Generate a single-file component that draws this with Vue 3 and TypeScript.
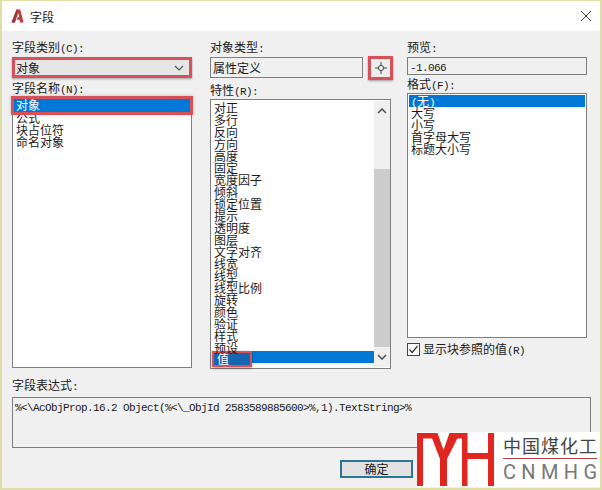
<script setup lang="ts">
const names: string[] = ['公式', '块占位符', '命名对象']
const props: string[] = ['对正', '多行', '反向', '方向', '高度', '固定', '宽度因子', '倾斜', '锁定位置', '提示', '透明度', '图层', '文字对齐', '线宽', '线型', '线型比例', '旋转', '颜色', '验证', '样式', '预设']
const formats: string[] = ['大写', '小写', '首字母大写', '标题大小写']
const logoLetters: string[] = ['C', 'N', 'M', 'H', 'G']
const expression = '%<\\AcObjProp.16.2 Object(%<\\_ObjId 2583589885600>%,1).TextString>%'
</script>

<template>
  <div class="window">
    <header class="title">
      <svg class="app-icon" width="13" height="14" viewBox="0 0 14 14" preserveAspectRatio="none">
        <path d="M0.5 13.5 L6 0.5 H10 L13.5 13.5 H9.6 L9.2 10.8 H6 L7.4 8 H8.7 L7.9 4 L4.2 13.5 Z" fill="#c43c42" />
        <path d="M0.5 13.5 L6 0.5 H7.5 L4.2 13.5 Z" fill="#8e3a40" />
      </svg>
      <span class="title-text">字段</span>
      <svg class="close" width="12" height="12" viewBox="0 0 12 12">
        <path d="M1 1 L11 11 M11 1 L1 11" stroke="#333" stroke-width="1" fill="none" />
      </svg>
    </header>

    <main class="content">
      <div class="top">
        <section class="col col-left">
          <label class="label">字段类别<span class="lat">(C):</span></label>
          <div class="combo">
            <span>对象</span>
            <svg width="10" height="6" viewBox="0 0 10 6"><path d="M1 1 L5 5 L9 1" stroke="#555" stroke-width="1.2" fill="none" /></svg>
          </div>
          <label class="label label-name">字段名称<span class="lat">(N):</span></label>
          <div class="list list-names">
            <div class="row selected marked">对象</div>
            <div v-for="n in names" :key="n" class="row">{{ n }}</div>
          </div>
        </section>

        <section class="col col-mid">
          <label class="label">对象类型<span class="lat">:</span></label>
          <div class="type-row">
            <div class="field type-field">属性定义</div>
            <button class="pick" type="button" aria-label="选择对象">
              <svg width="14" height="14" viewBox="0 0 14 14">
                <circle cx="7" cy="7" r="2.6" fill="none" stroke="#444" />
                <path d="M1 7 H4.4 M9.6 7 H13 M7 1 V4.4 M7 9.6 V13" stroke="#444" fill="none" />
              </svg>
            </button>
          </div>
          <label class="label label-prop">特性<span class="lat">(R):</span></label>
          <div class="list list-props">
            <div class="rows">
              <div v-for="p in props" :key="p" class="row">{{ p }}</div>
              <div class="row selected"><span class="value-mark">值</span></div>
            </div>
            <div class="scrollbar">
              <svg class="arrow" width="10" height="6" viewBox="0 0 10 6"><path d="M1 5 L5 1 L9 5" stroke="#555" stroke-width="1.6" fill="none" /></svg>
              <div class="track"><div class="thumb"></div></div>
              <svg class="arrow" width="10" height="6" viewBox="0 0 10 6"><path d="M1 1 L5 5 L9 1" stroke="#555" stroke-width="1.6" fill="none" /></svg>
            </div>
          </div>
        </section>

        <section class="col col-right">
          <label class="label">预览<span class="lat">:</span></label>
          <div class="field preview"><span class="lat">-1.066</span></div>
          <label class="label label-format">格式<span class="lat">(F):</span></label>
          <div class="list list-formats">
            <div class="row selected"><span class="lat">(</span>无<span class="lat">)</span></div>
            <div v-for="f in formats" :key="f" class="row">{{ f }}</div>
          </div>
          <div class="check-row">
            <svg width="13" height="13" viewBox="0 0 13 13">
              <rect x="0.5" y="0.5" width="12" height="12" fill="#fff" stroke="#444" />
              <path d="M2.5 6.5 L5.2 9.5 L10.5 3" stroke="#333" stroke-width="1.2" fill="none" />
            </svg>
            <span>显示块参照的值<span class="lat">(R)</span></span>
          </div>
        </section>
      </div>

      <label class="label label-expr">字段表达式<span class="lat">:</span></label>
      <div class="expr"><span class="lat">{{ expression }}</span></div>

      <div class="footer">
        <button class="ok" type="button">确定</button>
      </div>
    </main>

    <aside class="logo">
      <svg width="78" height="54" viewBox="0 0 78 54">
        <g fill="#e0261e">
          <rect x="0" y="1" width="6" height="53" />
          <rect x="0" y="1" width="20" height="5.5" />
          <rect x="36" y="1" width="14" height="5.5" />
          <path d="M13 1 H20.5 L26.5 18 L32.5 1 H43 L30 27 V54 H23 V27 Z" />
          <rect x="45" y="1" width="5.5" height="53" />
          <rect x="45" y="21" width="27" height="6" />
          <rect x="71" y="1" width="6" height="53" />
        </g>
      </svg>
      <div class="logo-text">
        <div class="logo-cn">中国煤化工</div>
        <div class="logo-line"></div>
        <div class="logo-en"><span v-for="l in logoLetters" :key="l">{{ l }}</span></div>
      </div>
    </aside>
  </div>
</template>

<style scoped>
* {
  box-sizing: border-box;
}
.window {
  position: relative;
  width: 602px;
  height: 490px;
  overflow: hidden;
  background: #f0f0f0;
  border-style: solid;
  border-color: #dedea6;
  border-width: 1px 2px 2px 2px;
  color: #1a1a1a;
  font-family: "Noto Sans CJK SC", "Liberation Sans", sans-serif;
  font-size: 12px;
}
.lat {
  font-family: "Liberation Mono", monospace;
  font-size: 11px;
  letter-spacing: -0.6px;
}
.title {
  display: flex;
  align-items: center;
  height: 30px;
  padding: 0 8px 0 9px;
  background: #fff;
}
.app-icon {
  margin-right: 6px;
}
.title-text {
  flex: 1;
}
.close {
  margin-top: -1px;
}
.content {
  padding: 9px 0 0 10px;
}
.top {
  display: flex;
  height: 329px;
}
.col {
  display: flex;
  flex-direction: column;
}
.col-left {
  width: 180px;
}
.col-mid {
  width: 183px;
  margin: 0 14px 0 18px;
}
.col-right {
  width: 180px;
}
.label {
  display: block;
  height: 14px;
  line-height: 14px;
}
.combo {
  display: flex;
  align-items: center;
  justify-content: space-between;
  height: 21px;
  margin-top: 3px;
  padding: 0 5px 0 1px;
  background: #e6e6e6;
  border: 3px solid #d6525a;
  box-shadow: 0 1px 2px rgba(0, 0, 0, 0.35);
}
.label-name {
  margin-top: 3px;
}
.list {
  margin-top: 2px;
  padding: 1px;
  background: #fff;
  border: 1px solid #7f7f7f;
}
.list-names {
  height: 271px;
}
.row {
  height: 12px;
  padding-left: 2px;
  line-height: 12px;
  white-space: nowrap;
}
.selected {
  background: #0078d7;
  color: #fff;
}
.marked {
  height: 13px;
  outline: 3px solid #d6525a;
  box-shadow: 0 0 3px 3px rgba(120, 60, 60, 0.3);
}
.type-row {
  display: flex;
  align-items: flex-start;
  height: 24px;
  margin-top: 2px;
}
.field {
  background: #f0f0f0;
  border: 1px solid #7f7f7f;
  padding-left: 2px;
}
.type-field {
  width: 153px;
  height: 21px;
  margin-top: 1px;
  line-height: 19px;
}
.pick {
  display: flex;
  align-items: center;
  justify-content: center;
  width: 25px;
  height: 24px;
  margin-left: 5px;
  padding: 0;
  background: #ececec;
  border: 3px solid #d6525a;
  box-shadow: 0 1px 2px rgba(0, 0, 0, 0.35);
}
.label-prop {
  margin-top: 3px;
}
.list-props {
  display: flex;
  width: 181px;
  height: 270px;
  padding: 1px 0 1px 1px;
}
.rows {
  width: 162px;
}
.rows .row {
  line-height: 14px;
}
.rows .value-mark {
  display: block;
  width: 40px;
  height: 16px;
  margin: -2px 0 0 -2px;
  padding-left: 3px;
  line-height: 12px;
  background: #1565b0;
  border: 2px solid #d6525a;
  box-shadow: 0 1px 3px rgba(0, 0, 0, 0.4);
}
.scrollbar {
  display: flex;
  flex-direction: column;
  align-items: center;
  width: 16px;
  background: #f0f0f0;
}
.arrow {
  flex: none;
  margin: 7px 0;
}
.track {
  flex: 1;
  display: flex;
  flex-direction: column;
  justify-content: flex-end;
  width: 100%;
}
.thumb {
  height: 178px;
  background: #cdcdcd;
}
.preview {
  height: 18px;
  margin-top: 3px;
  line-height: 16px;
}
.label-format {
  margin-top: 2px;
}
.list-formats {
  height: 245px;
}
.check-row {
  display: flex;
  align-items: center;
  gap: 3px;
  height: 13px;
  margin-top: 5px;
  line-height: 13px;
}
.label-expr {
  margin-top: 9px;
}
.expr {
  width: 579px;
  height: 51px;
  margin-top: 5px;
  padding: 1px 2px;
  background: #f0f0f0;
  border: 1px solid #7f7f7f;
  line-height: 14px;
  white-space: nowrap;
}
.footer {
  margin-top: 12px;
  padding-left: 328px;
}
.ok {
  display: block;
  width: 73px;
  height: 18px;
  padding: 0;
  background: #e1e1e1;
  border: 2px solid #2b7596;
  font: inherit;
  line-height: 14px;
  color: #1a1a1a;
}
.logo {
  position: absolute;
  left: 415px;
  top: 431px;
  display: flex;
  width: 183px;
  height: 55px;
  background: #fff;
}
.logo svg {
  flex: none;
  display: block;
}
.logo-text {
  width: 94px;
  margin-left: 8px;
}
.logo-cn {
  height: 26px;
  padding-top: 2px;
  font-size: 18px;
  line-height: 22px;
  letter-spacing: 1px;
  color: #444;
  white-space: nowrap;
}
.logo-line {
  height: 1px;
  background: #b5403f;
}
.logo-en {
  display: flex;
  justify-content: space-between;
  margin-top: 3px;
  font-family: Roboto, sans-serif;
  font-size: 20px;
  line-height: 20px;
  color: #777;
}
</style>
